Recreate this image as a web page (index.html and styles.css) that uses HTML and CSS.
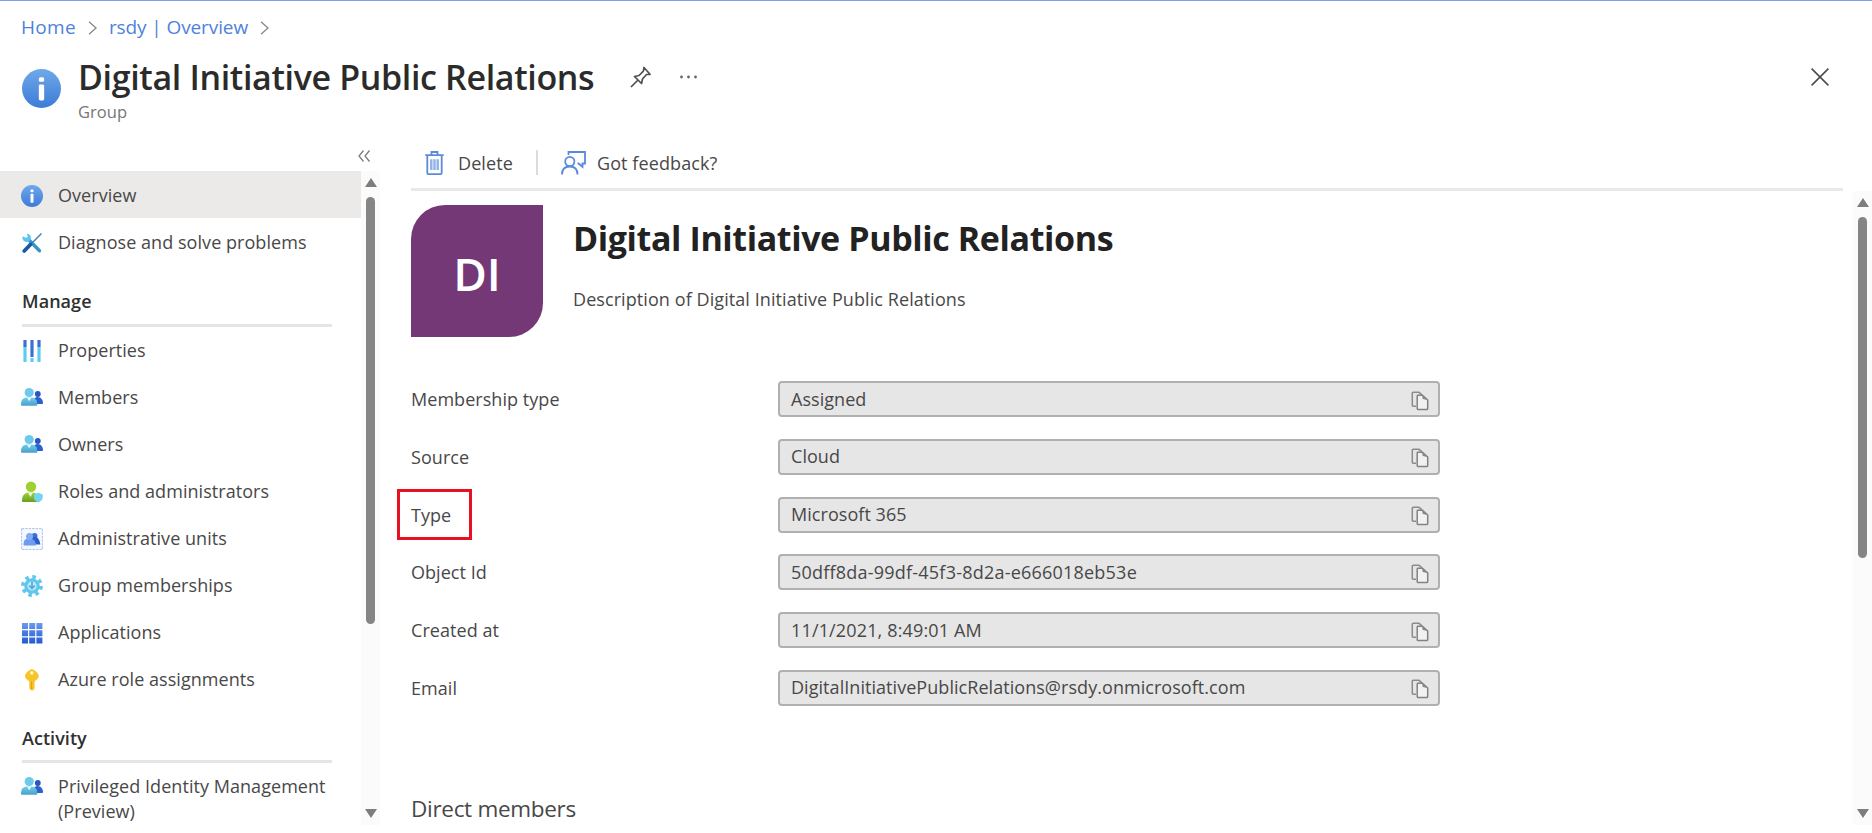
FILE: index.html
```html
<!DOCTYPE html>
<html lang="en">
<head>
<meta charset="utf-8">
<title>Digital Initiative Public Relations</title>
<link rel="stylesheet" href="styles.css">
</head>
<body>
<svg width="0" height="0" class="defs" aria-hidden="true">
  <defs>
    <linearGradient id="gBlue" x1="0" y1="0" x2="0" y2="1"><stop offset="0" stop-color="#6fa8ea"/><stop offset="1" stop-color="#3d7bd6"/></linearGradient>
    <linearGradient id="gTeal" x1="0" y1="0" x2="0" y2="1"><stop offset="0" stop-color="#6fd0ee"/><stop offset="1" stop-color="#4a9fcb"/></linearGradient>
    <linearGradient id="gGreen" x1="0" y1="0" x2="0" y2="1"><stop offset="0" stop-color="#a4d33a"/><stop offset="1" stop-color="#6a9e1f"/></linearGradient>
    <linearGradient id="gGrid" x1="0" y1="0" x2="0" y2="22" gradientUnits="userSpaceOnUse"><stop offset="0" stop-color="#6e9cf0"/><stop offset="1" stop-color="#2159cf"/></linearGradient>
    <symbol id="info" viewBox="0 0 22 22"><circle cx="11" cy="11" r="11" fill="url(#gBlue)"/><rect x="9.500" y="4.600" width="3" height="2.600" rx=".9" fill="#fff"/><rect x="9.500" y="8.700" width="3" height="9" rx=".8" fill="#fff"/></symbol>
    <symbol id="people" viewBox="0 0 22 22"><path d="M12.500 17c0-5 1-7 4.200-7s5.300 3 5.300 6c0 .8-.5 1-1 1z" fill="#2a62cc"/><circle cx="16.800" cy="7" r="2.900" fill="#2a55c4"/><path d="M0 17.800C0 12.500 2.200 10.200 8.300 10.200s8 2.800 8 7.600c0 .7-.4 1-1 1H1c-.6 0-1-.3-1-1z" fill="url(#gTeal)"/><path d="M5.700 10.300h5l-2.500 4z" fill="#e8f8fd"/><circle cx="8.200" cy="5.500" r="4.600" fill="#6ccbea"/></symbol>
    <symbol id="copy" viewBox="0 0 18 20"><path d="M5 15.200H2.200c-.6 0-.9-.3-.9-.9V2.200c0-.6.3-.9.900-.9H8l3 2.500" fill="none" stroke="#8b8b8b" stroke-width="1.500"/><path d="M6.500 4.200h5L16.700 9v8.500c0 .7-.4 1.100-1.100 1.100H7.300c-.7 0-1.100-.4-1.100-1.100V5.300c0-.5.100-.9.300-1.100z" fill="#f1f1f1" stroke="#828282" stroke-width="1.500" stroke-linejoin="round"/><path d="M11 4.200l.8 3.800 4.900 1z" fill="#858585"/></symbol>
  </defs>
</svg>
<div class="blade">
  <header class="header">
    <nav class="crumbs">
      <a>Home</a><svg class="chev" viewBox="0 0 9 14"><path d="M1 .8 8 7l-7 6.200"/></svg><a>rsdy | Overview</a><svg class="chev" viewBox="0 0 9 14"><path d="M1 .8 8 7l-7 6.200"/></svg>
    </nav>
    <div class="heading">
      <svg class="heading-icon"><use href="#info"/></svg>
      <div>
        <div class="title-row">
          <h1>Digital Initiative Public Relations</h1>
          <svg class="pin" viewBox="0 0 22 22"><path d="M1 21 7.500 14.500M4.500 10.500l7 7 1-4.500 4-4.500 3.500-.2L14 1.500l-.6 3.700L9 9.500z"/></svg>
          <svg class="dots" viewBox="0 0 17 4"><circle cx="1.500" cy="2" r="1.400"/><circle cx="8.500" cy="2" r="1.400"/><circle cx="15.500" cy="2" r="1.400"/></svg>
        </div>
        <div class="subtitle">Group</div>
      </div>
      <svg class="close" viewBox="0 0 18 18"><path d="M.6.6l16.800 16.800M17.400.6.6 17.400"/></svg>
    </div>
  </header>
  <div class="body">
    <aside class="side">
      <div class="collapse"><svg viewBox="0 0 12 12"><path d="M5.500.5 1 6l4.500 5.500M11.500.5 7 6l4.500 5.500"/></svg></div>
      <div class="side-scroll">
        <ul class="menu">
          <li class="item top active"><svg><use href="#info"/></svg><span>Overview</span></li>
          <li class="item top"><svg viewBox="0 0 22 22"><path d="M7 7l11.500 11.800" stroke="#3a93c5" stroke-width="3.400" stroke-linecap="round"/><path d="M1.800 4.200A4.200 4.200 0 1 0 5.800 1.600l1 2.900-1.700 1.600z" fill="#5cc6ec"/><path d="M20.500 1.500 9.500 12.500" stroke="#3f7fbd" stroke-width="1.500"/><path d="M9.500 12.500 3.200 19" stroke="#1a58a6" stroke-width="3.800" stroke-linecap="round"/></svg><span>Diagnose and solve problems</span></li>
          <li class="section">Manage</li>
          <li class="item"><svg viewBox="0 0 22 22"><path d="M4 7v15M18 7v15M11 18v4" stroke="#5bcdf0" stroke-width="3.200"/><path d="M4 0v7M18 0v7M11 0v17" stroke="#3e70d0" stroke-width="3.200"/></svg><span>Properties</span></li>
          <li class="item"><svg><use href="#people"/></svg><span>Members</span></li>
          <li class="item"><svg><use href="#people"/></svg><span>Owners</span></li>
          <li class="item"><svg viewBox="0 0 22 22"><path d="M1 20c0-6 2.500-8.800 8.500-8.800S18 14 18 20c0 .6-.4 1-1 1H2c-.6 0-1-.4-1-1z" fill="url(#gGreen)"/><path d="M6.800 11.300h5.400L9.500 16z" fill="#eef8dd"/><circle cx="10" cy="5.800" r="5.200" fill="#9fd032"/><path d="M17.300 11.800l4.400 1.700v3.300c0 2.300-2 3.700-4.400 4.700-2.400-1-4.400-2.400-4.400-4.700v-3.300z" fill="#74d5f3"/></svg><span>Roles and administrators</span></li>
          <li class="item"><svg viewBox="0 0 22 22"><rect x=".6" y=".6" width="20.800" height="20.800" fill="#f4f8ff" stroke="#a9c1f2" stroke-width="1" stroke-dasharray="2.500 1"/><circle cx="13.500" cy="8" r="3" fill="#3f6fd6"/><path d="M10 9h5c2.500 1 4 4 4.300 7.500H10z" fill="#2c5ecb"/><path d="M2.500 16.500c0-4.500 2-6 5.800-6s6.500 2 6.500 7H3.500c-.7 0-1-.4-1-1z" fill="#6d9bf0"/><circle cx="8.500" cy="8.500" r="3.500" fill="#82abf5"/></svg><span>Administrative units</span></li>
          <li class="item"><svg viewBox="0 0 22 22"><circle cx="11" cy="11" r="9" fill="none" stroke="#62c6ec" stroke-width="3.800" stroke-dasharray="3.530 3.540"/><circle cx="11" cy="11" r="6.200" fill="#bfe8f8" stroke="#62c6ec" stroke-width="3.200"/><path d="M11 6.500v6M8.200 10.500l2.800 3 2.800-3" fill="none" stroke="#4cabdc" stroke-width="1.700"/></svg><span>Group memberships</span></li>
          <li class="item"><svg viewBox="0 0 22 22"><path d="M1 1h6v6H1zM8.200 1h6v6h-6zM15.400 1h6v6h-6zM1 8.200h6v6H1zM8.200 8.200h6v6h-6zM15.400 8.200h6v6h-6zM1 15.400h6v6H1zM8.200 15.400h6v6h-6zM15.400 15.400h6v6h-6z" fill="url(#gGrid)"/></svg><span>Applications</span></li>
          <li class="item"><svg viewBox="0 0 22 22"><path d="M10.800.2c2.500 0 7 4.300 7 6.900 0 2-1.800 3.700-4.200 5.200v7.200L11 22l-2.700-2.500v-7.200C5.800 10.800 4 9 4 7.100 4 4.500 8.300.2 10.800.2z" fill="#f8c528"/><circle cx="10.800" cy="3.900" r="1.700" fill="#fff6d6"/><path d="M10.500 12.500v7.500" stroke="#e9a015" stroke-width="1.300"/></svg><span>Azure role assignments</span></li>
          <li class="section second">Activity</li>
          <li class="item two"><svg><use href="#people"/></svg><span>Privileged Identity Management<br>(Preview)</span></li>
        </ul>
        <div class="bar side-bar"><i class="up"></i><i class="thumb"></i><i class="down"></i></div>
      </div>
    </aside>
    <main class="main">
      <div class="toolbar">
        <div class="tool"><svg class="trash" viewBox="0 0 19 24"><path d="M.3 4.200h18.400M6.500 3.800V1h6v2.800M2.300 4.500v17.300c0 .9.500 1.400 1.400 1.400h11.600c.9 0 1.400-.5 1.400-1.400V4.500"/><path class="ribs" d="M6.300 8.200v10.800M9.500 8.200v10.800M12.700 8.200v10.800"/></svg><span>Delete</span></div>
        <i class="split"></i>
        <div class="tool"><svg class="feedback" viewBox="0 0 25 24"><path d="M7.500 4V1H24v11.500h-2.500v3.300L17.500 12.500h-1"/><circle cx="8.800" cy="10.500" r="4.600"/><path d="M1 23.500C1 18.500 4 15.500 8.800 15.500s7.700 3 7.700 8"/></svg><span>Got feedback?</span></div>
      </div>
      <div class="content">
        <div class="details">
          <div class="profile">
            <div class="avatar">DI</div>
            <div><h2>Digital Initiative Public Relations</h2><p class="desc">Description of Digital Initiative Public Relations</p></div>
          </div>
          <dl class="props">
            <div class="prop"><dt>Membership type</dt><dd><span>Assigned</span><svg><use href="#copy"/></svg></dd></div>
            <div class="prop"><dt>Source</dt><dd><span>Cloud</span><svg><use href="#copy"/></svg></dd></div>
            <div class="prop"><dt class="marked">Type</dt><dd><span>Microsoft 365</span><svg><use href="#copy"/></svg></dd></div>
            <div class="prop"><dt>Object Id</dt><dd><span class="oid">50dff8da-99df-45f3-8d2a-e666018eb53e</span><svg><use href="#copy"/></svg></dd></div>
            <div class="prop"><dt>Created at</dt><dd><span class="date">11/1/2021, 8:49:01 AM</span><svg><use href="#copy"/></svg></dd></div>
            <div class="prop"><dt>Email</dt><dd><span>DigitalInitiativePublicRelations@rsdy.onmicrosoft.com</span><svg><use href="#copy"/></svg></dd></div>
          </dl>
          <h3>Direct members</h3>
        </div>
        <div class="bar main-bar"><i class="up"></i><i class="thumb"></i><i class="down"></i></div>
      </div>
    </main>
  </div>
</div>
</body>
</html>
```
FILE: styles.css
```css
*, *::after { box-sizing: border-box; }
body { margin: 0; font-family: "Open Sans", "Noto Sans", sans-serif; font-size: 18px; letter-spacing: 0.050px; color: #484848; background: #fff; }
h1, h2, h3, p, ul, dl, dd { margin: 0; padding: 0; }
ul { list-style: none; }
svg { display: block; flex: none; fill: none; }
.defs { position: absolute; }
.blade { height: 833px; overflow: hidden; display: flex; flex-direction: column; border-top: 1px solid #7da1ea; }
.header { height: 146px; flex: none; padding: 13px 43px 0 21px; }
.crumbs { display: flex; align-items: center; height: 26px; color: #4f82dc; font-size: 19px; letter-spacing: 0; }
.crumbs a:first-child { letter-spacing: 0.300px; }
.crumbs a + svg + a { letter-spacing: -0.100px; }
.chev { width: 9px; height: 14px; margin: 1px 12px 0; stroke: #8a8a8a; stroke-width: 1.400; }
.heading { display: flex; padding-top: 13px; }
.heading-icon { width: 39px; height: 39px; margin: 16px 17px 0 1px; }
.title-row { display: flex; align-items: center; height: 48px; }
h1 { font-size: 34px; font-weight: 600; letter-spacing: -0.350px; line-height: 48px; color: #2b2b2b; width: 552px; white-space: nowrap; }
.pin { width: 22px; height: 22px; stroke: #505050; stroke-width: 1.700; stroke-linejoin: round; }
.dots { width: 17px; height: 4px; margin-left: 28px; fill: #666; }
.subtitle { font-size: 16.500px; line-height: 22px; color: #767676; }
.close { width: 18px; height: 18px; margin: 15px 0 0 auto; stroke: #4a4a4a; stroke-width: 1.500; }
.body { display: flex; flex: 1; min-height: 0; }
.side { width: 380px; flex: none; }
.collapse { height: 24px; padding: 3px 10px 0 0; display: flex; justify-content: flex-end; }
.collapse svg { width: 12px; height: 12px; stroke: #777; stroke-width: 1.200; }
.side-scroll { display: flex; height: 654px; }
.menu { width: 361px; overflow: hidden; }
.item { height: 47px; display: flex; align-items: center; padding-left: 21px; gap: 15px; white-space: nowrap; line-height: 25px; }
.item svg { width: 22px; height: 22px; }
.top { padding-top: 2px; }
.active { background: #ebeae8; }
.section { height: 62px; margin: 0 29px 0 22px; padding-top: 24px; line-height: 25px; font-weight: 600; color: #303030; border-bottom: 3px solid #e5e5e5; }
.second { height: 60px; padding-top: 23px; }
.two { height: 70px; align-items: flex-start; padding-top: 11px; }
.two svg { margin-top: 2px; }
.bar { width: 19px; background: #fbfbfb; display: flex; flex-direction: column; align-items: center; padding: 7px 0; }
.up { border: 6px solid transparent; border-top: 0; border-bottom: 9px solid #7d7d7d; }
.down { border: 6px solid transparent; border-bottom: 0; border-top: 9px solid #7d7d7d; margin-top: auto; }
.thumb { width: 9px; border-radius: 5px; background: #858585; margin-top: 10px; }
.side-bar .thumb { height: 427px; }
.main { flex: 1; min-width: 0; }
.toolbar { height: 44px; margin: 0 29px 0 31px; padding: 0 0 10px 14px; display: flex; align-items: center; border-bottom: 3px solid #e9e9e9; letter-spacing: 0.100px; }
.tool { display: flex; align-items: center; }
.tool svg { stroke: #5b8adc; stroke-width: 1.800; }
.trash { width: 19px; height: 24px; margin-right: 14px; }
.ribs { stroke: #8fb0ea; stroke-width: 2.400; }
.feedback { width: 25px; height: 24px; margin-right: 11px; }
.split { width: 2px; height: 25px; background: #dcdcdc; margin: 0 23px; }
.content { display: flex; justify-content: space-between; height: 634px; }
.details { padding: 14px 0 0 31px; }
.profile { display: flex; gap: 30px; height: 176px; }
.avatar { width: 132px; height: 132px; border-radius: 34px 0 34px 0; background: #743876; color: #fff; font-size: 46px; font-weight: 600; letter-spacing: -0.200px; display: flex; align-items: center; justify-content: center; padding-top: 4px; }
h2 { font-size: 34px; font-weight: 700; letter-spacing: -0.390px; line-height: 48px; color: #222; padding-top: 9px; white-space: nowrap; }
.desc { line-height: 25px; padding-top: 25px; letter-spacing: 0.080px; }
.prop { display: flex; height: 57.800px; align-items: flex-start; }
dt { width: 367px; line-height: 37px; }
dd { width: 662px; height: 36px; border: 2px solid #b0b0b0; border-radius: 4px; background: #e6e6e6; display: flex; align-items: center; justify-content: space-between; padding: 0 9px 0 11px; }
dd span { line-height: 30px; padding-bottom: 1px; }
dd svg { width: 18px; height: 20px; margin-top: 3px; }
.oid { letter-spacing: 0.220px; }
.date { letter-spacing: 0.150px; }
.marked { position: relative; }
.marked::after { content: ""; position: absolute; left: -14px; top: -8px; width: 75px; height: 51px; border: 3px solid #e81123; }
h3 { font-size: 22.500px; font-weight: 400; letter-spacing: -0.300px; line-height: 32px; padding-top: 65px; }
.main-bar .thumb { height: 341px; }
```
